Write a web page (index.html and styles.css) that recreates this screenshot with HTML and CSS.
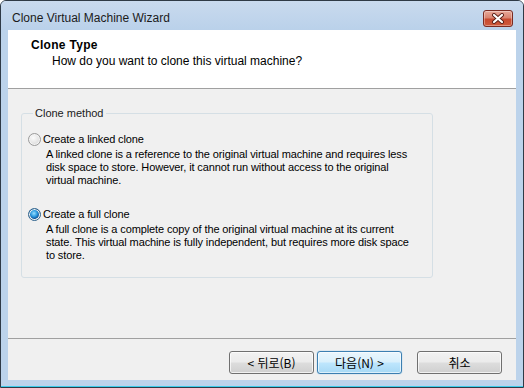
FILE: index.html
```html
<!DOCTYPE html>
<html lang="ko">
<head>
    <meta charset="UTF-8">
    <title>Clone Virtual Machine Wizard</title>
    <link rel="stylesheet" href="styles.css">
</head>
<body>
    <div class="window">
        <div class="titlebar">
            <span class="title">Clone Virtual Machine Wizard</span>
            <button class="close-btn" aria-label="Close">
                <svg width="14" height="11" viewBox="0 0 14 11">
                    <path d="M3 2 L11 9 M11 2 L3 9" stroke="#5a2018" stroke-width="4" stroke-linecap="round"/>
                    <path d="M3 2 L11 9 M11 2 L3 9" stroke="#fff" stroke-width="2.2" stroke-linecap="round"/>
                </svg>
            </button>
        </div>

        <div class="client">
            <div class="header">
                <div class="header-title">Clone Type</div>
                <div class="header-sub">How do you want to clone this virtual machine?</div>
            </div>

            <div class="content">
                <fieldset class="group">
                    <legend>Clone method</legend>

                    <div class="option">
                        <div class="option-label"><span class="radio"></span>Create a linked clone</div>
                        <div class="option-desc">
                            A linked clone is a reference to the original virtual machine and requires less<br>
                            disk space to store. However, it cannot run without access to the original<br>
                            virtual machine.
                        </div>
                    </div>

                    <div class="option">
                        <div class="option-label"><span class="radio checked"></span>Create a full clone</div>
                        <div class="option-desc">
                            A full clone is a complete copy of the original virtual machine at its current<br>
                            state. This virtual machine is fully independent, but requires more disk space<br>
                            to store.
                        </div>
                    </div>
                </fieldset>
            </div>

            <div class="footer">
                <button class="btn">&lt; 뒤로(B)</button>
                <button class="btn btn-default">다음(N) &gt;</button>
                <button class="btn btn-cancel">취소</button>
            </div>
        </div>
    </div>
</body>
</html>
```

FILE: styles.css
```css
body {
    margin: 0;
    background-color: #ffffff;
    font-family: "Liberation Sans", Arial, sans-serif;
}
.window {
    width: 524px;
    height: 388px;
    box-sizing: border-box;
    border: 1px solid #2f3a46;
    border-radius: 6px 6px 0 0;
    background-color: #bcd3eb;
    box-shadow: inset 0 -1px 0 #3ccbea;
    padding: 0 7px 7px;
    display: flex;
    flex-direction: column;
    overflow: hidden;
}
.titlebar {
    height: 29px;
    box-sizing: border-box;
    margin: 0 -7px;
    padding: 9px 10px 0 11px;
    display: flex;
    align-items: flex-start;
    background: linear-gradient(#c9daee, #bad1ea);
}
.title {
    flex: 1;
    font-size: 12px;
    line-height: 17px;
    color: #1b1b1b;
}
.close-btn {
    width: 30px;
    height: 17px;
    padding: 0;
    border: 1px solid #7a2b22;
    border-radius: 3px;
    background: linear-gradient(#e9a99a 0%, #d98470 45%, #c8492f 55%, #cf5a3c 100%);
    box-shadow: inset 0 0 0 1px rgba(255, 255, 255, 0.35);
    display: flex;
    align-items: center;
    justify-content: center;
}
.client {
    flex: 1;
    background-color: #f0f0f0;
    display: flex;
    flex-direction: column;
}
.header {
    height: 50px;
    background-color: #ffffff;
    border-bottom: 1px solid #a0a0a0;
    padding-top: 8px;
}
.header-title {
    font-size: 12px;
    line-height: 14px;
    font-weight: bold;
    padding-left: 23px;
    letter-spacing: 0.3px;
    color: #000;
}
.header-sub {
    font-size: 12px;
    line-height: 14px;
    padding-left: 44px;
    margin-top: 2px;
    color: #000;
}
.content {
    flex: 1;
    padding: 17px 0 0 13px;
}
.group {
    width: 398px;
    margin: 0;
    padding: 12px 6px 15px;
    border: 1px solid #d5dfe5;
    border-radius: 3px;
    font-size: 11px;
    letter-spacing: -0.12px;
    color: #000;
}
.group legend {
    padding: 0 2px;
    margin-left: 5px;
    font-size: 11px;
    line-height: 14px;
    letter-spacing: 0;
    color: #1a1a1a;
}
.option + .option {
    margin-top: 20px;
}
.option-label {
    display: flex;
    align-items: center;
    height: 14px;
    line-height: 14px;
}
.option-desc {
    margin: 2px 0 0 18px;
    line-height: 13px;
    white-space: nowrap;
}
.radio {
    width: 13px;
    height: 13px;
    box-sizing: border-box;
    margin-right: 2px;
    border-radius: 50%;
    border: 1px solid #9a9a9a;
    background: radial-gradient(circle at 40% 35%, #fbfbfb 0%, #e4e4e4 55%, #cfcfcf 100%);
    box-shadow: inset 0 0 0 1px #f4f4f4;
}
.radio.checked {
    border-color: #2d628c;
    background:
        radial-gradient(circle at 45% 40%, #9be0ff 0%, #2d9ae0 35%, #0c4f94 62%, transparent 66%),
        radial-gradient(circle, #ffffff 0%, #e6eef5 100%);
}
.footer {
    border-top: 1px solid #a0a0a0;
    padding: 12px 14px 6px 0;
    display: flex;
    justify-content: flex-end;
    gap: 3px;
}
.btn {
    width: 85px;
    height: 23px;
    padding: 0;
    border: 1px solid #707070;
    border-radius: 3px;
    background: linear-gradient(#f2f2f2 0%, #ebebeb 48%, #dddddd 52%, #cfcfcf 100%);
    box-shadow: inset 0 0 0 1px rgba(255, 255, 255, 0.7);
    font-family: "Noto Sans CJK KR", "Liberation Sans", sans-serif;
    font-size: 12px;
    color: #000;
}
.btn-default {
    border-color: #3c7fb1;
    background: linear-gradient(#eaf6fd 0%, #d9f0fc 48%, #bee6fd 52%, #a7d9f5 100%);
    box-shadow: inset 0 0 0 1px rgba(255, 255, 255, 0.6), 0 0 1px #48a4e0;
}
.btn-cancel {
    margin-left: 12px;
}
```
